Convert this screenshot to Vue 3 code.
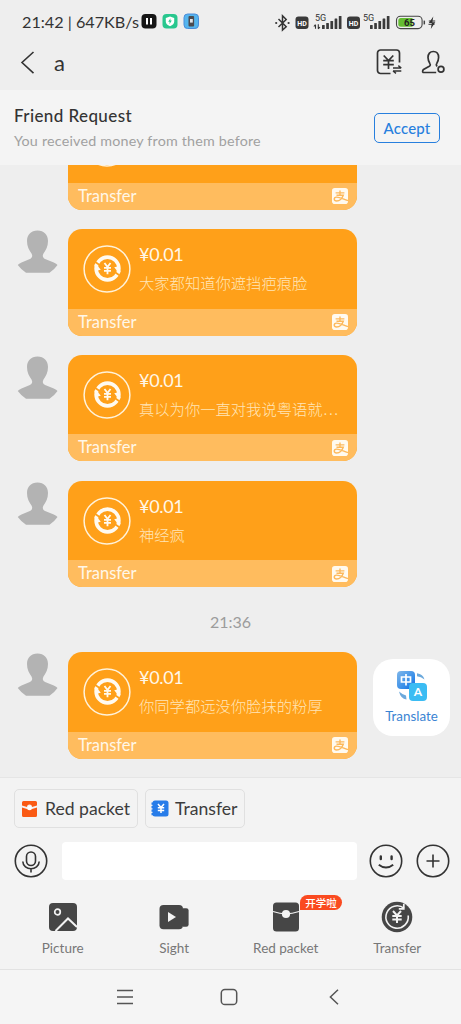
<script setup>
const messages = [
  { note: '' },
  { note: '大家都知道你遮挡疤痕脸' },
  { note: '真以为你一直对我说粤语就', cut: true },
  { note: '神经疯' },
  { time: '21:36', note: '你同学都远没你脸抹的粉厚' },
]
const bars = [4, 6, 8, 10.5, 13]
</script>

<template>
  <div class="phone">
    <header class="status">
      <span class="clock">21:42 | 647KB/s</span>
      <svg class="apps" width="60" height="18" viewBox="0 0 60 18">
        <rect x="0.5" y="2" width="15" height="14.5" rx="4" fill="#161616" />
        <path d="M6 6v6.5M10 6v6.5" stroke="#fff" stroke-width="2" />
        <rect x="21.5" y="2" width="15" height="14.5" rx="4" fill="#28c78e" />
        <path d="M29 4.5l4.2 1.6v3.4q0 3-4.2 4.7q-4.2-1.7-4.2-4.7v-3.4z" fill="#fff" />
        <path d="M29.5 6.2l-2.3 3.6h1.5l-.3 2.5 2.4-3.7h-1.5z" fill="#28c78e" />
        <rect x="43" y="2" width="14.5" height="14.5" rx="3.6" fill="#54b5ee" stroke="#4b8cda" stroke-width="1" />
        <rect x="47.5" y="4" width="5.6" height="10.5" rx="1" fill="#4b4b50" />
        <rect x="49" y="7" width="2.8" height="3.6" fill="#e2e5e9" />
      </svg>
      <svg class="signals" width="170" height="22" viewBox="0 0 170 22">
        <g fill="none" stroke="#333" stroke-width="1.5">
          <path d="M3.500 7l7.700 7.700L7.500 18V3.800l3.700 3.700L3.500 15" />
        </g>
        <circle cx="1.2" cy="11" r="1.1" fill="#333" />
        <circle cx="13.6" cy="11" r="1.1" fill="#333" />
        <rect x="20.500" y="4.500" width="13" height="12.500" rx="3" fill="#3a3a3a" />
        <text x="27" y="13.600" class="hd">HD</text>
        <text x="40" y="8.500" class="net">5G</text>
        <path d="M40.500 13v3.700M43.300 12.200v4.500M38.900 14.500l1.600-2M44.900 15l-1.600 2" stroke="#333" stroke-width="1.100" />
        <g v-for="(h, i) in bars" :key="i" fill="#3a3a3a">
          <rect :x="47 + i * 4.2" :y="17 - h" width="2.7" :height="h" rx=".5" />
          <rect :x="95 + i * 4.2" :y="17 - h" width="2.7" :height="h" rx=".5" />
        </g>
        <rect x="72" y="4.500" width="13" height="12.500" rx="3" fill="#3a3a3a" />
        <text x="78.500" y="13.600" class="hd">HD</text>
        <text x="88" y="8.500" class="net">5G</text>
        <rect x="121.500" y="4.200" width="25.6" height="12.4" rx="4" fill="none" stroke="#444" stroke-width="1.1" />
        <path d="M125.800 6H137.500v8.8h-11.700a2.500 2.500 0 0 1-2.500-2.500V8.500a2.500 2.500 0 0 1 2.500-2.500z" fill="#65bd32" />
        <text x="134.500" y="13.900" class="level">65</text>
        <path d="M149.300 8.600v3.800" stroke="#444" stroke-width="1.5" />
        <path d="M158.300 4.500l-4.500 6.600h3l-1 5.900 4.500-6.800h-3z" fill="#333" />
        <path d="M153.800 9h6.400M153.500 12.300h6" stroke="#333" stroke-width="1" />
      </svg>
    </header>

    <nav class="title">
      <svg width="16" height="24" viewBox="0 0 16 24" fill="none" stroke="#333" stroke-width="1.6">
        <path d="M13.5 1L2 11.500l11.500 10.600" />
      </svg>
      <span class="name">a</span>
      <svg class="money" width="28" height="28" viewBox="0 0 28 28" fill="none" stroke="#333" stroke-width="1.7">
        <path d="M16.500 24.5H6.500a3 3 0 0 1-3-3V4a3 3 0 0 1 3-3H22.500a3 3 0 0 1 3 3V13.500" />
        <path d="M9.700 6.500l4.800 5 4.800-5M14.500 11.500v8.500M9.200 11.700h10.600M9.200 15.700h10.600" />
        <path d="M19 19h8.300M24.300 16.600l3 2.400M27.300 22h-8.300M22 24.400l-3-2.400" stroke-width="1.4" />
      </svg>
      <svg class="person" width="25" height="25" viewBox="0 0 25 25" fill="none" stroke="#333" stroke-width="1.7">
        <path d="M15.2 22.5H2.1c-.8-.8-.6-2.2.4-3l5.8-3.2c1-.6 1.300-1.600.6-2.700C7.800 11.700 7 9.800 7 7.500c0-3.800 2-6 5.300-6s5.300 2.200 5.300 6c0 2.300-.8 4.200-1.900 6.100-.7 1.100-.4 2.100.6 2.700" />
        <circle cx="20" cy="19.300" r="2.900" />
      </svg>
    </nav>

    <section class="request">
      <div>
        <h1>Friend Request</h1>
        <p>You received money from them before</p>
      </div>
      <button class="accept">Accept</button>
    </section>

    <main class="chat">
      <template v-for="(m, i) in messages" :key="i">
        <div v-if="m.time" class="time">{{ m.time }}</div>
        <article class="message">
          <svg class="avatar" width="40" height="44" viewBox="0 0 40 44">
            <path d="M19.500.5C13 .5 9 5 9 11c0 5.500 2 9 4.500 12.400 1.300 2.200.8 4.400-1.600 5.600L3.500 32.500Q.8 33.800-.2 35 3 39.500 8 42.700h23.500q5-3.200 8-7.700-1-1.200-3.700-2.500L27.100 29c-2.400-1.200-2.900-3.400-1.600-5.600C28 20 30 16.500 30 11 30 5 26 .5 19.500.5z" fill="#b3b3b3" />
          </svg>
          <div class="card">
            <div class="body">
              <svg width="48" height="48" viewBox="0 0 48 48" fill="none">
                <circle cx="24" cy="24" r="22.900" stroke="#fff2da" stroke-width="1.500" />
                <circle cx="24.500" cy="23.500" r="11.400" stroke="#fffaf0" stroke-width="3.600" />
                <path d="M11.200 19.500l3.800 1.800 2.800 3.400-4.600 1zM37.800 27.500l-3.800-1.800-2.800-3.400 4.600-1z" fill="#fffaf0" />
                <path d="M10.500 15.800l7.500 5.200M31 26.500l7.500 5.200" stroke="#ffa019" stroke-width="1.700" />
                <path d="M21.500 18l3 4 3-4M24.500 21.500v7.700M21 22.800h7M21 25.900h7" stroke="#fffaf0" stroke-width="1.800" />
              </svg>
              <div v-if="m.note" class="detail">
                <div class="amount">¥0.01</div>
                <div class="note">{{ m.note }}<span v-if="m.cut" class="dots">...</span></div>
              </div>
            </div>
            <footer>
              <span>Transfer</span>
              <svg width="16" height="16" viewBox="0 0 16 16">
                <rect width="16" height="16" rx="2.800" fill="#fffaf0" />
                <path d="M3.600 4.900h8.800M8 2.500v4.700M4.500 7.300h6.800C10.300 10 8 13 4.700 13 1.600 13 1.300 9.400 4.500 9.100c3-.2 6 1.700 11.500 3.500" fill="none" stroke="#fdb95c" stroke-width="1.400" />
              </svg>
            </footer>
          </div>
        </article>
      </template>

      <aside class="translate">
        <svg width="32" height="32" viewBox="0 0 32 32">
          <defs>
            <linearGradient id="tile" x1="0" y1="0" x2="1" y2="1">
              <stop offset="0" stop-color="#80b7e9" />
              <stop offset=".65" stop-color="#348ce9" />
              <stop offset="1" stop-color="#1264dc" />
            </linearGradient>
          </defs>
          <rect x="1" y="1" width="18" height="18" rx="4" fill="url(#tile)" />
          <path d="M5.500 7h9v5h-9zM10 4v11.500" fill="none" stroke="#fff" stroke-width="1.700" />
          <rect x="13" y="13" width="18" height="18" rx="4" fill="#3bbcf3" />
          <text x="22" y="26.300" class="letter">A</text>
          <path d="M21 3.300q6 .7 7.500 6.200-3.500-3-7.500-3.200zM3 21.500q4 3.500 7 4l.5 4Q4.500 28.500 3 21.500z" fill="#6ca9dc" />
        </svg>
        <span>Translate</span>
      </aside>
    </main>

    <section class="composer">
      <div class="chips">
        <button class="chip red">
          <svg width="15" height="16" viewBox="0 0 15 16">
            <path d="M1.500 0h12A1.500 1.500 0 0 1 15 1.500v3L10 6a2.500 2.500 0 0 0-5 0L0 4.500v-3A1.500 1.500 0 0 1 1.500 0zM0 6.500L5 8q2.500 2.500 5 0l5-1.500v8a1.500 1.500 0 0 1-1.500 1.500h-12A1.500 1.500 0 0 1 0 14.500z" fill="#fa5a14" />
            <circle cx="7.500" cy="7" r="2.100" fill="#fff" />
          </svg>
          <span>Red packet</span>
        </button>
        <button class="chip blue">
          <svg width="18" height="17" viewBox="0 0 18 17">
            <rect x="1.500" y=".5" width="16" height="16" rx="2.500" fill="#277ce9" />
            <path d="M1.500 2.500v13" stroke="#277ce9" stroke-width="2" stroke-dasharray="2.200 1.300" />
            <path d="M7 4l3 3.500L13 4M10 7.500V13M6.800 7.800h6.400M6.800 10.500h6.400" fill="none" stroke="#fff" stroke-width="1.500" />
          </svg>
          <span>Transfer</span>
        </button>
      </div>
      <div class="entry">
        <svg width="34" height="34" viewBox="0 0 34 34" fill="none" stroke="#333" stroke-width="1.600">
          <circle cx="17" cy="17" r="15.700" />
          <rect x="12.500" y="8" width="9" height="13.500" rx="4.500" />
          <path d="M8.800 17.500c.4 9.600 16 9.600 16.400 0M17 24.800v3.600" />
        </svg>
        <div class="field"></div>
        <svg class="smile" width="34" height="34" viewBox="0 0 34 34" fill="none" stroke="#333" stroke-width="1.600">
          <circle cx="17" cy="17" r="15.700" />
          <path d="M11.800 12.500v2.600M22.600 12.500v2.600" stroke-width="2.400" stroke-linecap="round" />
          <path d="M9.800 20.700q7.200 5.600 14.400 0" stroke-width="2" />
        </svg>
        <svg class="plus" width="34" height="34" viewBox="0 0 34 34" fill="none" stroke="#333" stroke-width="1.600">
          <circle cx="17" cy="17" r="15.700" />
          <path d="M10.500 17h13M17 10.500v13" />
        </svg>
      </div>
      <div class="tools">
        <div class="tool">
          <svg width="30" height="30" viewBox="0 0 30 30">
            <rect x="1" y="1" width="28" height="28" rx="4" fill="#464646" />
            <circle cx="9.500" cy="10" r="2.800" fill="none" stroke="#f3f3f3" stroke-width="1.700" />
            <path d="M7.500 29L20 16.500l9 8.500" fill="none" stroke="#f3f3f3" stroke-width="2" />
          </svg>
          <span>Picture</span>
        </div>
        <div class="tool">
          <svg width="30" height="30" viewBox="0 0 30 30">
            <rect x=".5" y="3" width="23.500" height="24.300" rx="4" fill="#464646" />
            <path d="M24 6.200h3.300q2.300 0 2.300 2.300v14q0 2.300-2.300 2.300H24z" fill="#464646" />
            <path d="M9 10v10l8-5z" fill="#f3f3f3" />
          </svg>
          <span>Sight</span>
        </div>
        <div class="tool">
          <svg width="30" height="30" viewBox="0 0 30 30">
            <rect x="2" y=".5" width="26" height="29" rx="3.500" fill="#464646" />
            <path d="M2 9.500q7 2.300 13 2.300t13-2.300" fill="none" stroke="#f3f3f3" stroke-width="1.300" />
            <circle cx="15" cy="12" r="4.100" fill="#f3f3f3" />
          </svg>
          <b class="badge">开学啦</b>
          <span>Red packet</span>
        </div>
        <div class="tool">
          <svg width="32" height="32" viewBox="0 0 32 32" fill="none">
            <circle cx="16" cy="16" r="15.300" fill="#464646" />
            <path d="M23 7.200A11.200 11.200 0 1 0 27.200 14.500" stroke="#f3f3f3" stroke-width="1.600" />
            <path d="M22.800 2.800v5h-5" stroke="#f3f3f3" stroke-width="1.700" />
            <path d="M12 10l4 4.500 4-4.500M16 14v8M11.300 14.900h9.400M11.300 18.400h9.400" stroke="#f3f3f3" stroke-width="2" />
          </svg>
          <span>Transfer</span>
        </div>
      </div>
    </section>

    <footer class="system">
      <svg width="18" height="18" viewBox="0 0 18 18" fill="none" stroke="#555" stroke-width="1.500"><path d="M1 2.500h16M1 9h16M1 15.500h16" /></svg>
      <svg width="18" height="18" viewBox="0 0 18 18" fill="none" stroke="#555" stroke-width="1.500"><rect x="1.300" y="1.500" width="15.400" height="15" rx="3.600" /></svg>
      <svg width="18" height="18" viewBox="0 0 18 18" fill="none" stroke="#555" stroke-width="1.500"><path d="M13 1.800L5.400 9 13 16.200" /></svg>
    </footer>
  </div>
</template>

<style>
body { margin: 0; background: #ededed; }
</style>

<style scoped>
* { box-sizing: border-box; }
.phone { width: 461px; height: 1024px; overflow: hidden; display: flex; flex-direction: column; background: #eee; color: #333; font-family: Lato, "Noto Sans CJK SC", sans-serif; }
svg { display: block; flex: none; overflow: visible; }
button { font: inherit; background: none; padding: 0; white-space: nowrap; }
.status { height: 35px; flex: none; display: flex; padding: 12px 0 0 22px; }
.clock { width: 119px; font-size: 16.200px; line-height: 20px; white-space: pre; letter-spacing: 0; }
.apps { margin-top: 0; }
.signals { margin-left: 74px; }
.hd { font: bold 7px Roboto, sans-serif; fill: #fff; text-anchor: middle; }
.net { font: 9px Roboto, sans-serif; fill: #333; }
.level { font: bold 9.500px Roboto, sans-serif; fill: #222; text-anchor: middle; }
.title { height: 55px; flex: none; display: flex; align-items: center; padding: 0 15px 0 20px; }
.name { font-size: 22px; line-height: 28px; margin: 0 auto 0 18px; }
.person { margin-left: 19px; }
.request { height: 75px; flex: none; background: #f4f4f4; display: flex; align-items: center; justify-content: space-between; padding: 0 21px 0 14px; }
h1 { font-size: 17px; line-height: 22px; font-weight: 500; letter-spacing: .4px; margin: 1px 0 4px; }
p { font-size: 14.300px; line-height: 20px; letter-spacing: .200px; margin: 0; color: #a1a1a1; }
.accept { width: 66px; height: 30px; border: 1.500px solid #277fde; border-radius: 5px; color: #277fde; font-size: 15px; font-weight: 500; letter-spacing: .2px; }
.chat { position: relative; height: 612px; flex: none; overflow: hidden; }
.message { display: flex; align-items: flex-start; height: 106.500px; margin-bottom: 19.300px; padding-left: 18px; }
.message:first-child { margin-top: -61.700px; }
.avatar { margin: 1px 10px 0 0; }
.card { width: 289px; height: 106.500px; border-radius: 14px; overflow: hidden; background: #ffa019; color: #fff7e8; }
.body { display: flex; height: 79.500px; padding: 16px 0 0 15px; }
.detail { margin-left: 8px; }
.amount { font-size: 18px; line-height: 22px; letter-spacing: -.3px; margin-top: -2px; }
.note { font-family: "Noto Sans CJK SC", sans-serif; font-size: 15.300px; line-height: 22px; margin-top: 6px; font-weight: 300; color: #ffe5b7; white-space: nowrap; }
.dots { letter-spacing: 1.500px; margin-left: 1px; }
.card footer { height: 27px; display: flex; align-items: center; justify-content: space-between; padding: 0 9px 0 10px; background: #ffbc5e; font-size: 16.500px; }
.card footer span { line-height: 20px; margin-top: -1px; }
.time { height: 64.800px; margin-top: -19.300px; line-height: 70px; text-align: center; font-size: 16px; color: #9c9c9c; }
.translate { position: absolute; left: 373px; top: 494px; width: 77px; height: 77px; border-radius: 20px; background: #fff; display: flex; flex-direction: column; align-items: center; padding-top: 11px; color: #3b84d3; font-size: 13.400px; line-height: 18px; }
.translate span { margin-top: 5px; }
.letter { font: bold 12px Lato, sans-serif; fill: #fff; text-anchor: middle; }
.composer { height: 191.500px; flex: none; background: #f3f3f3; border-top: 1px solid #e5e5e5; }
.chips { display: flex; gap: 7px; padding: 11px 14px 0; }
.chip { height: 39px; border: 1px solid #e0e0e0; border-radius: 5px; display: flex; align-items: center; color: #3c3c3c; font-size: 17.600px; }
.red { width: 124px; padding-left: 7px; }
.red span { margin-left: 8px; }
.blue { width: 100px; padding-left: 5px; }
.blue span { margin-left: 6px; }
.entry { display: flex; align-items: center; padding: 14px 0 0 13.500px; }
.field { width: 295px; height: 38px; border-radius: 4px; background: #fff; margin-left: 14.500px; }
.smile { margin-left: 11.500px; }
.plus { margin-left: 13px; }
.tools { display: flex; padding: 21px 8px 0 7px; }
.tool { position: relative; width: 111.500px; height: 60px; display: flex; flex-direction: column; align-items: center; justify-content: flex-start; font-size: 13.500px; line-height: 18px; color: #777; }
.tool svg { height: 32px; }
.tool span { margin-top: 6px; white-space: nowrap; }
.badge { position: absolute; left: 70px; top: -6px; width: 42px; height: 15px; border-radius: 8px 8px 8px 0; background: #fa4a20; color: #fff; font: 500 10.500px/15px "Noto Sans CJK SC", sans-serif; text-align: center; }
.system { flex: 1; display: flex; justify-content: center; gap: 86.500px; padding: 18px 3px 0 0; background: #f5f5f5; border-top: 1px solid #e2e2e2; }
</style>
